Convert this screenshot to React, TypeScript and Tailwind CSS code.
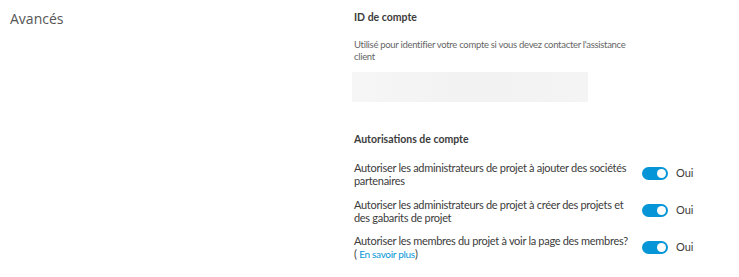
import { useState } from "react";

type Perm = { id: string; label: string; learnMore?: boolean };

const perms: Perm[] = [
  { id: "partners", label: "Autoriser les administrateurs de projet à ajouter des sociétés partenaires" },
  { id: "templates", label: "Autoriser les administrateurs de projet à créer des projets et des gabarits de projet" },
  { id: "members", label: "Autoriser les membres du projet à voir la page des membres?", learnMore: true },
];

function Toggle({ on, onChange }: { on: boolean; onChange: () => void }) {
  return (
    <button
      type="button"
      onClick={onChange}
      className={`relative h-[13px] w-[26px] shrink-0 rounded-full ${on ? "bg-[#0696d7]" : "bg-[#bfbfbf]"}`}
    >
      <span
        className={`absolute top-[2px] h-[9px] w-[9px] rounded-full bg-white ${on ? "left-[15px]" : "left-[2px]"}`}
      />
    </button>
  );
}

export default function App() {
  const [values, setValues] = useState<Record<string, boolean>>({
    partners: true,
    templates: true,
    members: true,
  });

  return (
    <div className="flex h-[277px] w-[739px] bg-white font-['Lato',sans-serif] text-[#3c3c3c]">
      <div className="w-[354px] pl-[10px] pt-[9px]">
        <h2 className="font-['Open_Sans',sans-serif] text-[14px] leading-[20px] text-[#555]">Avancés</h2>
      </div>
      <div className="flex-1 pt-[10px]">
        <h3 className="text-[10.5px] font-bold leading-[14px]">ID de compte</h3>
        <p className="mt-[15px] w-[292px] text-[9.5px] leading-[12px] tracking-[-0.3px] text-[#666]">
          Utilisé pour identifier votre compte si vous devez contacter l'assistance client
        </p>
        <div className="ml-[-2px] mt-[9px] h-[30px] w-[236px] bg-gradient-to-r from-[#f6f6f6] via-[#f2f2f2] to-[#f4f4f4]" />

        <h3 className="mt-[30px] text-[10.5px] font-bold leading-[14px]">Autorisations de compte</h3>
        <div className="mt-[14px] flex flex-col gap-[10px]">
          {perms.map((p) => (
            <div key={p.id} className="flex h-[27px] items-center">
              <p className="w-[288px] pr-[4px] text-[11px] leading-[13px] tracking-[-0.3px]">
                {p.label}
                {p.learnMore && (
                  <>
                    <br />( <a className="text-[10px] text-[#0696d7]">En savoir plus</a>)
                  </>
                )}
              </p>
              <Toggle
                on={values[p.id]}
                onChange={() => setValues({ ...values, [p.id]: !values[p.id] })}
              />
              <span className="ml-[8px] text-[11px]">{values[p.id] ? "Oui" : "Non"}</span>
            </div>
          ))}
        </div>
      </div>
    </div>
  );
}
